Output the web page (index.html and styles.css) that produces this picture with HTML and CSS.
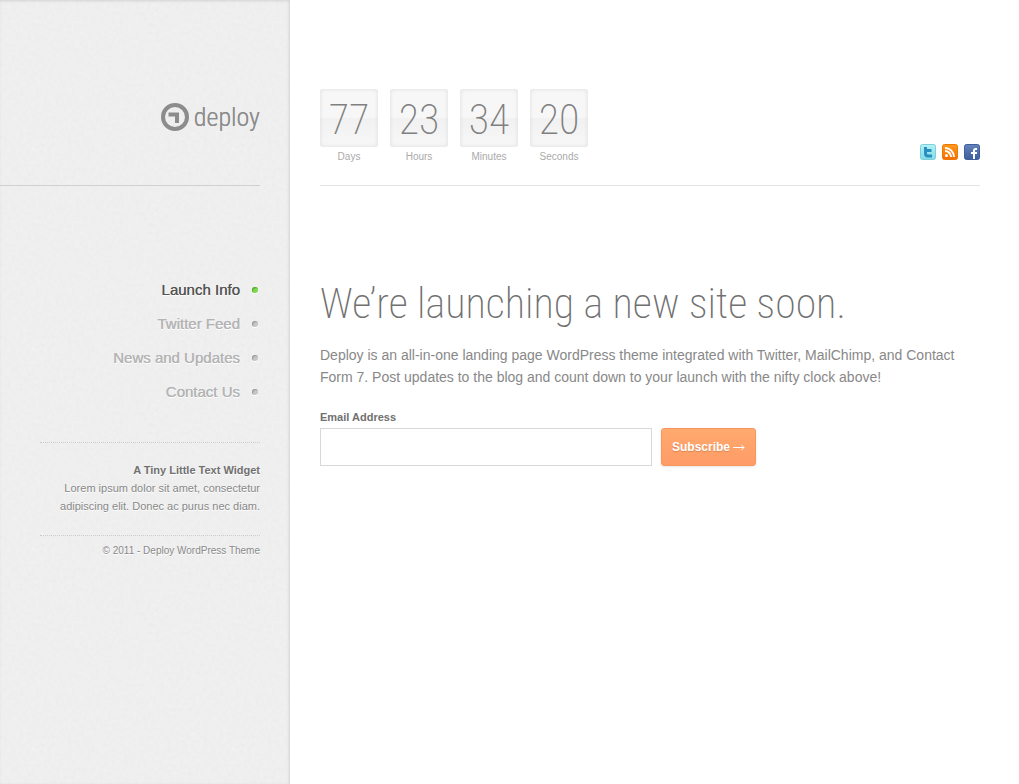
FILE: index.html
```html
<!DOCTYPE html>
<html lang="en">
<head>
    <meta charset="UTF-8">
    <meta name="viewport" content="width=device-width, initial-scale=1.0">
    <title>Deploy</title>
    <link rel="stylesheet" href="styles.css">
</head>
<body>
    <aside class="sidebar">
        <div class="branding">
            <a class="logo" href="#">
                <svg width="28" height="28" viewBox="0 0 28 28" aria-hidden="true">
                    <circle cx="14" cy="14" r="12" fill="none" stroke="#8c8c8c" stroke-width="4"/>
                    <path d="M7.500 11.500h8.500v8.500" fill="none" stroke="#8c8c8c" stroke-width="4"/>
                </svg>
                <span>deploy</span>
            </a>
        </div>

        <nav class="menu">
            <a class="active" href="#">Launch Info</a>
            <a href="#">Twitter Feed</a>
            <a href="#">News and Updates</a>
            <a href="#">Contact Us</a>
        </nav>

        <div class="widget">
            <strong>A Tiny Little Text Widget</strong>
            <p>Lorem ipsum dolor sit amet, consectetur adipiscing elit. Donec ac purus nec diam.</p>
        </div>

        <footer class="copyright">© 2011 - Deploy WordPress Theme</footer>
    </aside>

    <main class="content">
        <header class="header">
            <div class="clock">
                <div class="unit"><span class="digits">77</span><span class="name">Days</span></div>
                <div class="unit"><span class="digits">23</span><span class="name">Hours</span></div>
                <div class="unit"><span class="digits">34</span><span class="name">Minutes</span></div>
                <div class="unit"><span class="digits">20</span><span class="name">Seconds</span></div>
            </div>

            <div class="social">
                <a href="#" aria-label="Twitter">
                    <svg width="16" height="16" viewBox="0 0 16 16">
                        <defs><linearGradient id="tw" x2="0" y2="1"><stop stop-color="#b4f2f6"/><stop offset="1" stop-color="#7fdce6"/></linearGradient></defs>
                        <rect x=".5" y=".5" width="15" height="15" rx="2" fill="url(#tw)" stroke="#7cd0da"/>
                        <path d="M5.500 3v6.500q0 2.500 2.500 2.500h4M5.500 6.500h6" fill="none" stroke="#2a8fc0" stroke-width="3"/>
                    </svg>
                </a>
                <a href="#" aria-label="RSS">
                    <svg width="16" height="16" viewBox="0 0 16 16">
                        <defs><linearGradient id="rss" x2="0" y2="1"><stop stop-color="#ff9a1f"/><stop offset="1" stop-color="#f66c00"/></linearGradient></defs>
                        <rect x=".5" y=".5" width="15" height="15" rx="2" fill="url(#rss)" stroke="#f07800"/>
                        <circle cx="4.500" cy="11.500" r="1.500" fill="#fff"/>
                        <path d="M3 7a6 6 0 0 1 6 6M3 4a9 9 0 0 1 9 9" fill="none" stroke="#fff" stroke-width="2"/>
                    </svg>
                </a>
                <a href="#" aria-label="Facebook">
                    <svg width="16" height="16" viewBox="0 0 16 16">
                        <defs><linearGradient id="fb" x2="0" y2="1"><stop stop-color="#6583bb"/><stop offset="1" stop-color="#3d5e9e"/></linearGradient></defs>
                        <rect x=".5" y=".5" width="15" height="15" rx="2" fill="url(#fb)" stroke="#3f5f9c"/>
                        <path d="M13 5h-1.500q-1.500 0-1.500 1.500V15M7 9h6" fill="none" stroke="#fff" stroke-width="2"/>
                    </svg>
                </a>
            </div>
        </header>

        <h1>We’re launching a new site soon.</h1>
        <p class="intro">Deploy is an all-in-one landing page WordPress theme integrated with Twitter, MailChimp, and Contact Form 7. Post updates to the blog and count down to your launch with the nifty clock above!</p>

        <form class="subscribe">
            <label for="email">Email Address</label>
            <div class="fields">
                <input type="email" id="email">
                <button type="submit">Subscribe
                    <svg width="12" height="7" viewBox="0 0 12 7" aria-hidden="true"><path d="M0 3.500h11M8.500 1l2.500 2.500L8.500 6" fill="none" stroke="#fff"/></svg>
                </button>
            </div>
        </form>
    </main>
</body>
</html>
```
FILE: styles.css
```css
* {
    box-sizing: border-box;
}

body {
    display: flex;
    min-height: 100vh;
    margin: 0;
    background: #fff;
    color: #888;
    font-family: "Liberation Sans", Arial, sans-serif;
}

a {
    color: inherit;
    text-decoration: none;
}

/* Sidebar */
.sidebar {
    flex: 0 0 290px;
    padding-right: 30px;
    background-color: #f0f0f0;
    /* paper grain */
    background-image: url("data:image/svg+xml,%3Csvg xmlns='http://www.w3.org/2000/svg' width='200' height='200'%3E%3Cfilter id='n'%3E%3CfeTurbulence type='fractalNoise' baseFrequency='.25' numOctaves='3' stitchTiles='stitch'/%3E%3CfeColorMatrix values='0 0 0 0 .5 0 0 0 0 .5 0 0 0 0 .5 .15 0 0 0 -.05'/%3E%3C/filter%3E%3Crect width='200' height='200' filter='url(%23n)'/%3E%3C/svg%3E");
    box-shadow: inset -1px 1px 3px rgba(0, 0, 0, 0.12);
    text-align: right;
    text-shadow: 0 1px 0 #fff;
}

.branding {
    height: 186px;
    padding-top: 101px;
    border-bottom: 1px solid #d0d0d0;
}

.logo {
    display: inline-flex;
    align-items: center;
    gap: 5px;
    color: #8c8c8c;
    font: 400 26px/32px "Roboto Condensed", Roboto, sans-serif;
    font-weight: 300;
    text-shadow: 0 0 0 currentColor;
}

.menu {
    display: flex;
    flex-direction: column;
    margin: 87px 0 33px;
}

.menu a {
    display: flex;
    align-items: center;
    justify-content: flex-end;
    gap: 12px;
    padding-right: 2px;
    color: #b4b4b4;
    font-size: 15px;
    line-height: 34px;
    text-shadow: 0 0 0 currentColor, 0 1px 0 #fff;
}

.menu a::after {
    content: "";
    width: 6px;
    height: 6px;
    border-radius: 50%;
    background: #c6c6c6;
    box-shadow: inset 1px 1px 1px #999, 0 1px 0 #fff;
}

.menu .active {
    color: #555;
}

.menu .active::after {
    background: #7fd94f;
    box-shadow: inset 1px 1px 1px #55a52e, 0 1px 0 #fff;
}

.widget {
    margin-left: 40px;
    padding: 18px 0 20px;
    border-top: 1px dotted #ccc;
    font-size: 11px;
    line-height: 18px;
}

.widget strong {
    color: #707070;
}

.widget p {
    margin: 0;
}

.copyright {
    margin-left: 40px;
    padding-top: 6px;
    border-top: 1px dotted #ccc;
    font-size: 10px;
    line-height: 18px;
}

/* Content */
.content {
    flex: 1;
    max-width: 720px;
    padding: 0 30px;
}

.header {
    display: flex;
    justify-content: space-between;
    height: 186px;
    padding-top: 89px;
    border-bottom: 1px solid #e4e4e4;
}

.clock {
    display: flex;
    gap: 12px;
}

.unit {
    width: 58px;
    text-align: center;
}

.digits {
    display: block;
    height: 58px;
    border-radius: 3px;
    background: linear-gradient(#f7f7f7 50%, #f1f1f1 50%, #f7f7f7);
    box-shadow: inset 0 0 4px #dcdcdc;
    color: #808080;
    font: 200 42px/62px "Roboto Condensed", Roboto, sans-serif;
}

.name {
    display: block;
    color: #aaa;
    font-size: 10px;
    line-height: 20px;
}

.social {
    display: flex;
    gap: 6px;
    padding-top: 55px;
}

.social a,
.social svg {
    display: block;
    height: 16px;
}

h1 {
    margin: 93px 0 15px;
    color: #707070;
    font: 200 42px/50px "Roboto Condensed", Roboto, sans-serif;
}

.intro {
    margin: 0 0 20px;
    font-size: 14px;
    line-height: 22px;
}

.subscribe label {
    display: block;
    padding-bottom: 2px;
    color: #707070;
    font-size: 11px;
    font-weight: bold;
    line-height: 18px;
}

.fields {
    display: flex;
    gap: 9px;
}

.fields input {
    width: 332px;
    height: 38px;
    padding: 0 10px;
    border: 1px solid #d8d8d8;
    background: #fff;
    font: inherit;
}

.fields button {
    display: flex;
    align-items: center;
    justify-content: center;
    gap: 3px;
    height: 38px;
    padding: 0 10px;
    border: 1px solid #f9965f;
    border-radius: 3px;
    background: linear-gradient(#ffaa6f, #ff9b66);
    box-shadow: 0 1px 3px rgba(0, 0, 0, 0.1);
    color: #fff;
    font: bold 12px "Liberation Sans", Arial, sans-serif;
    text-shadow: 0 1px 1px #d98350;
    cursor: pointer;
}
```
